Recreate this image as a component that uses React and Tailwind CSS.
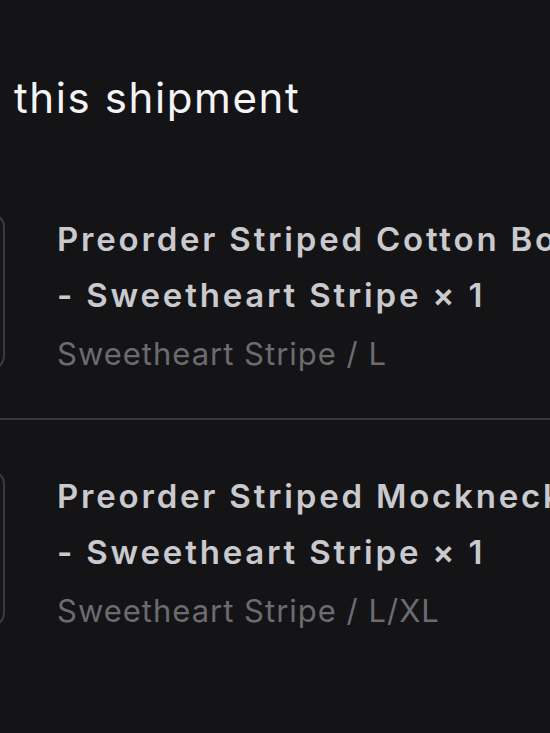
const items = [
  { title: 'Preorder Striped Cotton Boxer Shorts', color: 'Sweetheart Stripe', qty: 1, variant: 'Sweetheart Stripe / L' },
  { title: 'Preorder Striped Mockneck Top', color: 'Sweetheart Stripe', qty: 1, variant: 'Sweetheart Stripe / L/XL' },
];

function LineItem({ item }) {
  return (
    <div className="flex items-start pt-[50px] pb-[46px]">
      <div className="-ml-[152px] h-[157px] w-[157px] shrink-0 rounded-[14px] border-2 border-[#3a3a3d] bg-[#161618]" />
      <div className="-mt-[2px] ml-[52px] min-w-0 flex-1 whitespace-nowrap overflow-hidden">
        <p className="text-[33px] font-semibold leading-[56px] tracking-[2.8px] text-[#c9c9ce]">{item.title}</p>
        <p className="text-[33px] font-semibold leading-[56px] tracking-[2.8px] text-[#c9c9ce]">
          - {item.color} × {item.qty}
        </p>
        <p className="mt-[13px] text-[31px] leading-[36px] tracking-[1px] text-[#6b6b70]">{item.variant}</p>
      </div>
    </div>
  );
}

export default function App() {
  return (
    <div className="min-h-screen w-full overflow-hidden bg-[#141416] font-['Inter','Noto_Sans',sans-serif]">
      <h2 className="pl-[14px] pt-[73px] text-[42px] leading-[50px] font-normal tracking-[1.6px] text-[#f4f4f6]">this shipment</h2>
      <div className="mt-[40px]">
        <LineItem item={items[0]} />
        <div className="h-[2px] bg-[#3a3a3d]" />
        <LineItem item={items[1]} />
      </div>
    </div>
  );
}
